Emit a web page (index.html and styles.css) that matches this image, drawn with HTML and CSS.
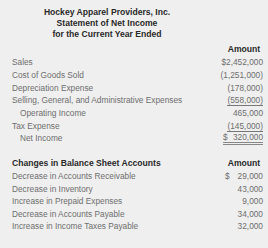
FILE: index.html
```html
<!DOCTYPE html>
<html>
<head>
<meta charset="utf-8">
<link rel="stylesheet" href="styles.css">
</head>
<body>
<div class="page">
  <div class="title">
    <div>Hockey Apparel Providers, Inc.</div>
    <div>Statement of Net Income</div>
    <div>for the Current Year Ended</div>
  </div>
  <div class="table t1">
    <div class="row head"><span class="label"></span><span class="amt">Amount</span></div>
    <div class="row"><span class="label">Sales</span><span class="amt">$2,452,000</span></div>
    <div class="row"><span class="label">Cost of Goods Sold</span><span class="amt">(1,251,000)</span></div>
    <div class="row"><span class="label">Depreciation Expense</span><span class="amt">(178,000)</span></div>
    <div class="row"><span class="label">Selling, General, and Administrative Expenses</span><span class="amt"><span class="ul">(558,000)</span></span></div>
    <div class="row"><span class="label indent">Operating Income</span><span class="amt">465,000</span></div>
    <div class="row"><span class="label">Tax Expense</span><span class="amt"><span class="ul">(145,000)</span></span></div>
    <div class="row"><span class="label indent">Net Income</span><span class="amt"><span class="dul"><span>$</span><span>320,000</span></span></span></div>
  </div>
  <div class="table t2">
    <div class="row head"><span class="label">Changes in Balance Sheet Accounts</span><span class="amt">Amount</span></div>
    <div class="row"><span class="label">Decrease in Accounts Receivable</span><span class="amt dollar"><span>$</span><span>29,000</span></span></div>
    <div class="row"><span class="label">Decrease in Inventory</span><span class="amt">43,000</span></div>
    <div class="row"><span class="label">Increase in Prepaid Expenses</span><span class="amt">9,000</span></div>
    <div class="row"><span class="label">Decrease in Accounts Payable</span><span class="amt">34,000</span></div>
    <div class="row"><span class="label">Increase in Income Taxes Payable</span><span class="amt">32,000</span></div>
  </div>
</div>
</body>
</html>
```
FILE: styles.css
```css
html, body {
  margin: 0;
  padding: 0;
  background: #efefef;
}
.page {
  width: 268px;
  height: 248px;
  box-sizing: border-box;
  padding: 7px 5px 0 12px;
  font-family: "Liberation Sans", Arial, sans-serif;
  font-size: 8.3px;
  color: #6e6e6e;
}
.title {
  width: 190px;
  text-align: center;
  font-weight: bold;
  color: #2a2a2a;
  font-size: 8.6px;
  line-height: 11px;
}
.table {
  display: flex;
  flex-direction: column;
}
.t1 {
  margin-top: 2px;
}
.t2 {
  margin-top: 11px;
}
.row {
  display: flex;
  justify-content: space-between;
  align-items: center;
  height: 12.7px;
}
.t2 .row {
  height: 12.6px;
}
.t2 .head {
  height: 14px;
}
.head {
  font-weight: bold;
  color: #2a2a2a;
  font-size: 8.6px;
}
.t1 .head {
  height: 14px;
}
.label.indent {
  padding-left: 8px;
}
.amt {
  width: 46px;
  text-align: right;
}
.head .amt {
  text-align: center;
  padding-left: 8px;
  box-sizing: border-box;
}
.ul {
  border-bottom: 1px solid #777;
}
.dul {
  display: flex;
  justify-content: space-between;
  border-bottom: 3px double #888;
  width: 40px;
  margin-left: auto;
}
.dollar {
  display: flex;
  justify-content: space-between;
  box-sizing: border-box;
  padding-left: 8px;
}
```
